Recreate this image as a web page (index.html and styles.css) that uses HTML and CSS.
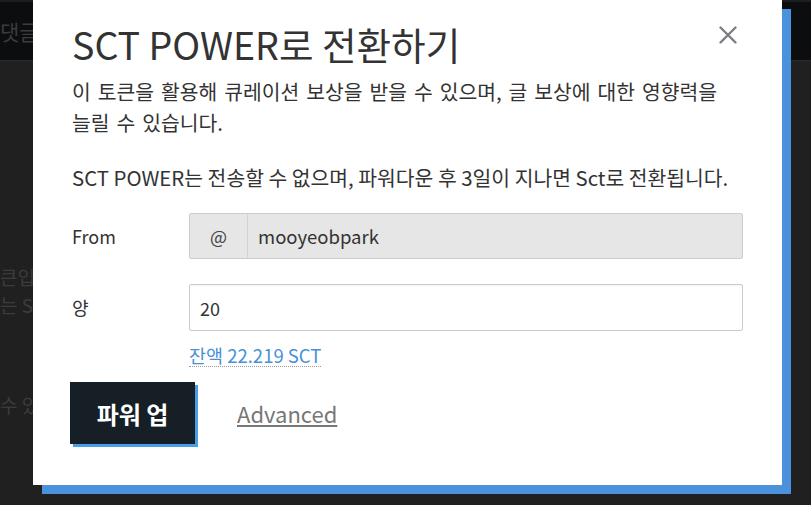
FILE: index.html
```html
<!DOCTYPE html>
<html>
<head>
    <title>SCT POWER로 전환하기</title>
    <link rel="stylesheet" href="styles.css">
</head>
<body>
    <div class="topbar">
        <span class="topbar-text">댓글</span>
    </div>
    <div class="page">
        <p class="page-line">큰입</p>
        <p class="page-line">는 SC</p>
        <p class="page-line last">수 있</p>
    </div>

    <div class="modal">
        <div class="modal-head">
            <h2>SCT POWER로 전환하기</h2>
            <button class="close" type="button" aria-label="닫기">
                <svg width="18" height="18" viewBox="0 0 18 18">
                    <path d="M1.5 1.5 L16.5 16.5 M16.5 1.5 L1.5 16.5" stroke="#7b7e82" stroke-width="2.4" stroke-linecap="round"/>
                </svg>
            </button>
        </div>
        <p class="desc first">이 토큰을 활용해 큐레이션 보상을 받을 수 있으며, 글 보상에 대한 영향력을 늘릴 수 있습니다.</p>
        <p class="desc second">SCT POWER는 전송할 수 없으며, 파워다운 후 3일이 지나면 Sct로 전환됩니다.</p>

        <form id="powerForm">
            <div class="row">
                <label>From</label>
                <div class="input-group">
                    <span class="addon">@</span>
                    <input type="text" value="mooyeobpark" disabled>
                </div>
            </div>
            <div class="row">
                <label>양</label>
                <div class="field">
                    <input type="text" class="amount" value="20">
                    <a class="balance" href="#">잔액 22.219 SCT</a>
                </div>
            </div>
            <div class="actions">
                <button type="submit" class="submit">파워 업</button>
                <a class="advanced" href="#">Advanced</a>
            </div>
        </form>
    </div>
</body>
</html>
```

FILE: styles.css
```css
body { margin: 0; height: 505px; overflow: hidden; background: #202020; font-family: "Noto Sans CJK KR", "Noto Sans", sans-serif; color: #333; }
.topbar { height: 58px; background: #0b0d0f; border-top: 2px solid #1d1d1d; border-bottom: 1px solid #2a2a2a; display: flex; align-items: center; }
.topbar-text { color: #3a3c3f; font-size: 21px; }
.page { padding-top: 202px; }
.page-line { margin: 0; font-size: 19px; line-height: 28px; color: #3c3c3c; white-space: nowrap; }
.page-line.last { margin-top: 72px; }

.modal { position: absolute; left: 33px; top: 0; width: 671px; height: 461px; padding: 24px 39px 0 39px; background: #fff; box-shadow: 9px 9px 0 #4a93dc; }
.modal-head { display: flex; justify-content: space-between; align-items: flex-start; }
.modal-head h2 { margin: 0; font-size: 37.6px; font-weight: 400; line-height: 40px; color: #333; }
.close { background: none; border: none; padding: 0; margin: 2px 6px 0 0; cursor: pointer; }
.desc { margin: 12px 0 0 0; font-size: 20.4px; line-height: 31px; color: #333; word-break: keep-all; }
.desc.first { word-spacing: 2.4px; }
.desc.second { margin-top: 24px; }

form { margin-top: 20px; }
.row { display: flex; align-items: flex-start; margin-bottom: 25px; }
.row label { width: 117px; font-size: 18px; line-height: 46px; color: #333; }
.input-group { flex: 1; display: flex; height: 44px; border: 1px solid #ccc; border-radius: 2px; background: #e6e6e6; }
.addon { width: 57px; border-right: 1px solid #d2d2d2; display: flex; align-items: center; justify-content: center; font-size: 18px; color: #444; }
.input-group input { flex: 1; border: none; background: none; padding: 0 10px; font: inherit; font-size: 18.5px; color: #333; }
.field { flex: 1; display: flex; flex-direction: column; align-items: flex-start; }
.amount { width: 100%; box-sizing: border-box; height: 47px; border: 1px solid #ccc; border-radius: 2px; padding: 0 10px; font: inherit; font-size: 18px; color: #333; box-shadow: inset 0 1px 1px rgba(0,0,0,0.04); }
.balance { margin-top: 13px; font-size: 18.5px; line-height: 22px; color: #4a90d9; text-decoration: none; border-bottom: 1px dotted #999; }

.actions { display: flex; align-items: center; margin-top: -10px; margin-left: -2px; }
.submit { width: 125px; height: 62px; background: #171f26; color: #fff; border: none; font: inherit; font-size: 24px; font-weight: 700; box-shadow: 3px 3px 0 #4a9ee6; cursor: pointer; }
.advanced { margin-left: 42px; font-size: 22px; color: #777; text-decoration: underline; }
```
